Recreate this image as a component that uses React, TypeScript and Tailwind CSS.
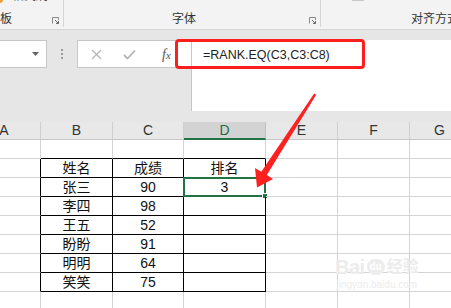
import React from 'react';

const cols = [
  { key: 'A', w: 41 },
  { key: 'B', w: 72 },
  { key: 'C', w: 71 },
  { key: 'D', w: 82 },
  { key: 'E', w: 72 },
  { key: 'F', w: 72 },
  { key: 'G', w: 60 },
];

const data: string[][] = [
  ['姓名', '成绩', '排名'],
  ['张三', '90', '3'],
  ['李四', '98', ''],
  ['王五', '52', ''],
  ['盼盼', '91', ''],
  ['明明', '64', ''],
  ['笑笑', '75', ''],
];

const FONT = { fontFamily: '"Liberation Sans", "Noto Sans CJK SC", sans-serif' };

function Launcher() {
  return (
    <svg width="7" height="7" viewBox="0 0 7 7" className="mb-[3px]">
      <path d="M0.5 6.5V0.5H6.5V3" fill="none" stroke="#8a8a8a" strokeWidth="1" />
      <path d="M3 3L6.5 6.5M6.5 4V6.5H4" fill="none" stroke="#6a6a6a" strokeWidth="1" />
    </svg>
  );
}

function Ribbon() {
  return (
    <div className="h-[30px] bg-[#f3f3f3] border-b border-[#d5d5d5] flex text-[12px] text-[#333]">
      <div className="w-[64px] border-r border-[#d5d5d5] mb-[2px] flex items-end justify-between pr-[4px] relative">
        <div className="absolute left-0 top-0 w-[3px] h-[3px] bg-[#e8a33c] rounded-br-sm" />
        <div className="absolute left-[12px] -top-[13px] text-[12px] text-[#444]">格式刷</div>
        <span className="leading-[12px] mb-[2px]">板</span>
        <Launcher />
      </div>
      <div className="w-[257px] border-r border-[#d5d5d5] mb-[2px] flex items-end pr-[4px]">
        <span className="leading-[12px] mb-[2px] ml-[108px]">字体</span>
        <div className="flex-1" />
        <Launcher />
      </div>
      <div className="flex-1 flex items-end relative overflow-hidden whitespace-nowrap">
        <div className="absolute left-[31px] top-0 w-[12px] h-[1px] bg-[#c8c8c8]" />
        <span className="leading-[12px] mb-[4px] ml-[90px]">对齐方式</span>
      </div>
    </div>
  );
}

function FormulaArea() {
  return (
    <div className="h-[92px] bg-[#e6e6e6] pt-[10px] flex relative">
      <div className="w-[47px] h-[28px] bg-white border border-[#c6c6c6] border-l-0 flex items-center justify-end pr-[7px]">
        <svg width="7" height="4" viewBox="0 0 7 4">
          <path d="M0 0H7L3.5 4Z" fill="#666" />
        </svg>
      </div>
      <div className="w-[30px] h-[28px] flex flex-col items-center justify-center gap-[2px]">
        <div className="w-[2px] h-[2px] bg-[#9a9a9a]" />
        <div className="w-[2px] h-[2px] bg-[#9a9a9a]" />
        <div className="w-[2px] h-[2px] bg-[#9a9a9a]" />
      </div>
      <div className="w-[114px] h-[28px] bg-white border border-[#c6c6c6] border-r-0 flex items-center">
        <svg width="11" height="11" viewBox="0 0 11 11" className="ml-[13px]">
          <path d="M1 1L10 10M10 1L1 10" stroke="#b4b4b4" strokeWidth="1.3" />
        </svg>
        <svg width="13" height="11" viewBox="0 0 13 11" className="ml-[21px]">
          <path d="M1 6L4.5 9.5L12 1.5" fill="none" stroke="#b4b4b4" strokeWidth="1.8" />
        </svg>
        <span
          className="ml-[26px] italic text-[14px] text-[#555]"
          style={{ fontFamily: '"Liberation Serif", serif' }}
        >
          f<span className="text-[11px]">x</span>
        </span>
      </div>
      <div className="flex-1 h-[71px] bg-white border-l border-[#c6c6c6] pl-[11px] pt-[6px] text-[12.5px] text-[#222]">
        =RANK.EQ(C3,C3:C8)
      </div>
      <div className="absolute left-[175px] top-[9px] w-[190px] h-[30px] border-[3px] border-[#ff1e1e] rounded-[4px]" />
    </div>
  );
}

function ColumnHeaders() {
  return (
    <div className="flex h-[18px]">
      {cols.map((c) => {
        const active = c.key === 'D';
        return (
          <div
            key={c.key}
            style={{ width: c.w }}
            className={
              active
                ? 'shrink-0 bg-[#d3d3d3] border-r border-[#c0c0c0] border-b-2 border-b-[#217346] flex items-center justify-center text-[14px] text-[#1e6b46]'
                : 'shrink-0 bg-[#e8e8e8] border-r border-[#cfcfcf] border-b border-b-[#c6c6c6] flex items-center justify-center text-[14px] text-[#333]'
            }
          >
            <span className={c.key === 'A' ? '-ml-[32px]' : ''}>{c.key}</span>
          </div>
        );
      })}
    </div>
  );
}

function Grid() {
  const rows = Array.from({ length: 9 }, (_, i) => i);
  return (
    <div>
      {rows.map((r) => (
        <div key={r} className="flex h-[19px]">
          {cols.map((c, ci) => {
            const inTableRow = r >= 1 && r <= 7;
            const rightBlack = inTableRow && ci <= 3;
            const bottomBlack = r <= 7 && ci >= 1 && ci <= 3;
            const text = inTableRow && ci >= 1 && ci <= 3 ? data[r - 1][ci - 1] : '';
            const selected = r === 2 && ci === 3;
            return (
              <div
                key={c.key}
                style={{ width: c.w }}
                className={
                  'shrink-0 relative flex items-center justify-center text-[14px] text-[#111] leading-none border-r border-b ' +
                  (rightBlack ? 'border-r-black ' : 'border-r-[#d4d4d4] ') +
                  (bottomBlack ? 'border-b-black' : 'border-b-[#d4d4d4]')
                }
              >
                {text}
                {selected && (
                  <>
                    <div className="absolute -left-[1px] -top-[1px] -right-[1px] -bottom-[1px] border-2 border-[#217346]" />
                    <div className="absolute -right-[3px] -bottom-[3px] w-[6px] h-[6px] bg-[#217346] border border-white" />
                  </>
                )}
              </div>
            );
          })}
        </div>
      ))}
    </div>
  );
}

function Watermark() {
  return (
    <div className="absolute left-[335px] top-[257px] flex flex-col items-center text-[#ececec] pointer-events-none">
      <div className="flex items-center gap-[2px]">
        <span className="text-[20px] font-bold tracking-tight leading-none">Bai</span>
        <span className="w-[18px] h-[16px] rounded-full bg-[#ededed] text-white text-[10px] font-bold flex items-center justify-center leading-none">
          du
        </span>
        <span className="text-[16px] font-bold leading-none">经验</span>
      </div>
      <span className="text-[10px] leading-none mt-[3px]">jingyan.baidu.com</span>
    </div>
  );
}

function Arrow() {
  return (
    <svg className="absolute inset-0 pointer-events-none" width="451" height="308" viewBox="0 0 451 308">
      <polygon
        points="314.2,93.5 316.2,94.7 266.8,175 273,179 257,187.5 255,168 261.3,171.8"
        fill="#ff2020"
      />
    </svg>
  );
}

export default function App() {
  return (
    <div className="w-[451px] h-[308px] overflow-hidden relative bg-white" style={FONT}>
      <Ribbon />
      <FormulaArea />
      <ColumnHeaders />
      <Grid />
      <Watermark />
      <Arrow />
    </div>
  );
}
